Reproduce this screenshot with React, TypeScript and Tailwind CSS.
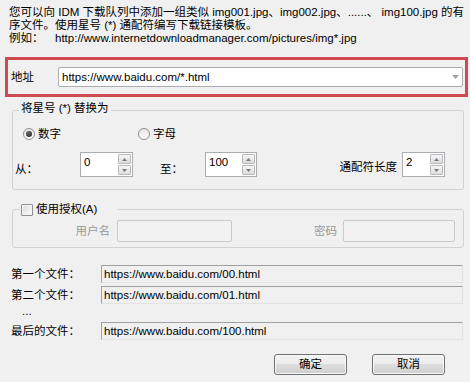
import React from 'react';

const SpinButton = ({ up }: { up: boolean }) => (
    <div className="flex-1 flex items-center justify-center border border-[#b9b9b9] rounded-[1px] bg-[linear-gradient(#f7f7f7,#dcdcdc)]">
        <svg width="5" height="3" viewBox="0 0 5 3">
            {up ? <path d="M0 3L2.5 0L5 3Z" fill="#7a7a7a" /> : <path d="M0 0L2.5 3L5 0Z" fill="#7a7a7a" />}
        </svg>
    </div>
);

const SpinBox = ({ value, className }: { value: string; className: string }) => (
    <div className={`${className} h-[25px] flex border border-[#abadb3] bg-white`}>
        <div className="flex-1 pl-[3px] pt-[3px]">{value}</div>
        <div className="w-[15px] flex flex-col gap-[1px] p-[1px]">
            <SpinButton up />
            <SpinButton up={false} />
        </div>
    </div>
);

const Radio = ({ checked }: { checked: boolean }) => (
    <div className="w-[12px] h-[12px] rounded-full border border-[#8e8f8f] bg-[linear-gradient(#e6e6e6,#ffffff)] flex items-center justify-center">
        {checked && <div className="w-[6px] h-[6px] rounded-full bg-[radial-gradient(circle_at_40%_35%,#6b6b6b,#161616)]" />}
    </div>
);

const FileRow = ({ label, value, className }: { label: string; value: string; className: string }) => (
    <div className={`flex items-center pl-[11px] ${className}`}>
        <div className="w-[90px] whitespace-nowrap">{label}</div>
        <div className="w-[362px] h-[18px] flex items-center pl-[2px] border border-t-[#a0a0a0] border-l-[#a0a0a0] border-r-[#e3e3e3] border-b-[#e3e3e3] whitespace-nowrap">
            {value}
        </div>
    </div>
);

const App = () => {
    return (
        <div className="w-[470px] h-[382px] overflow-hidden bg-[#f0f0f0] text-black text-[11.5px] leading-[13px] font-['Liberation_Sans','Noto_Sans_CJK_SC',sans-serif]">
            {/* intro */}
            <div className="pt-[6px] pl-[9px]">
                <div className="whitespace-nowrap">您可以向 IDM 下载队列中添加一组类似 img001.jpg、img002.jpg、......、 img100.jpg 的有</div>
                <div className="whitespace-nowrap">序文件。使用星号 (*) 通配符编写下载链接模板。</div>
                <div className="flex whitespace-nowrap">
                    <span className="w-[46px]">例如：</span>
                    <span>http://www.internetdownloadmanager.com/pictures/img*.jpg</span>
                </div>
            </div>

            {/* address */}
            <div className="mt-[12px] ml-[5px] w-[463px] h-[40px] border-[3px] border-[#cc4a50] flex items-start pt-[7px] pl-[3px]">
                <div className="w-[47px] h-[20px] flex items-center">地址</div>
                <div className="w-[405px] h-[20px] flex items-center justify-between pl-[3px] pr-[3px] border border-[#abadb3] rounded-[2px] bg-white">
                    <span className="whitespace-nowrap">https://www.baidu.com/*.html</span>
                    <svg width="7" height="4" viewBox="0 0 7 4">
                        <path d="M0 0L3.5 4L7 0Z" fill="#a3a3a3" />
                    </svg>
                </div>
            </div>

            {/* replace group */}
            <div className="relative mt-[13px] ml-[12px] w-[452px] h-[80px] border border-[#d2d2d2] rounded-[3px]">
                <span className="absolute left-[6px] top-[-9px] px-[2px] bg-[#f0f0f0] whitespace-nowrap">将星号 (*) 替换为</span>
                <div className="flex items-center h-[14px] mt-[16px] pl-[10px]">
                    <div className="w-[115px] flex items-center gap-[3px]">
                        <Radio checked />
                        <span>数字</span>
                    </div>
                    <div className="flex items-center gap-[3px]">
                        <Radio checked={false} />
                        <span>字母</span>
                    </div>
                </div>
                <div className="flex items-end mt-[11px] pl-[2px] pr-[18px]">
                    <div className="w-[65px] pb-[1px]">从：</div>
                    <SpinBox value="0" className="w-[53px]" />
                    <div className="w-[72px] pl-[27px] pb-[1px]">至：</div>
                    <SpinBox value="100" className="w-[52px]" />
                    <div className="ml-auto mr-[5px] pb-[3px] whitespace-nowrap">通配符长度</div>
                    <SpinBox value="2" className="w-[43px]" />
                </div>
            </div>

            {/* auth group */}
            <div className="relative mt-[19px] ml-[12px] w-[452px] h-[39px] border border-[#d2d2d2] rounded-[3px]">
                <div className="absolute left-[7px] top-[-7px] w-[98px] h-[13px] flex items-center gap-[3px] pl-[1px] bg-[#f0f0f0]">
                    <div className="w-[12px] h-[12px] border border-[#8e8f8f] rounded-[1px] bg-[linear-gradient(135deg,#dcdcdc,#fbfbfb)] shadow-[inset_0_0_0_1px_#f4f4f4]" />
                    <span className="whitespace-nowrap">使用授权(A)</span>
                </div>
                <div className="flex items-center mt-[10px] text-[#9a9a9a]">
                    <div className="w-[97px] text-right mr-[7px]">用户名</div>
                    <div className="w-[115px] h-[22px] border border-[#cacaca] rounded-[2px] bg-[#f2f2f2]" />
                    <div className="w-[105px] text-right mr-[6px]">密码</div>
                    <div className="w-[112px] h-[22px] border border-[#cacaca] rounded-[2px] bg-[#f2f2f2]" />
                </div>
            </div>

            {/* files */}
            <FileRow label="第一个文件：" value="https://www.baidu.com/00.html" className="mt-[17px]" />
            <FileRow label="第二个文件：" value="https://www.baidu.com/01.html" className="mt-[3px]" />
            <div className="pl-[22px] mt-[2px] h-[13px] leading-[10px]">...</div>
            <FileRow label="最后的文件：" value="https://www.baidu.com/100.html" className="mt-[3px]" />

            {/* buttons */}
            <div className="flex justify-end gap-[25px] pr-[25px] mt-[14px]">
                <button className="w-[73px] h-[21px] border border-[#707070] rounded-[3px] bg-[linear-gradient(#f2f2f2_0%,#ebebeb_49%,#dddddd_50%,#cfcfcf_100%)] shadow-[inset_0_0_0_1px_#fbfbfb]">确定</button>
                <button className="w-[73px] h-[21px] border border-[#707070] rounded-[3px] bg-[linear-gradient(#f2f2f2_0%,#ebebeb_49%,#dddddd_50%,#cfcfcf_100%)] shadow-[inset_0_0_0_1px_#fbfbfb]">取消</button>
            </div>
        </div>
    );
};

export default App;
